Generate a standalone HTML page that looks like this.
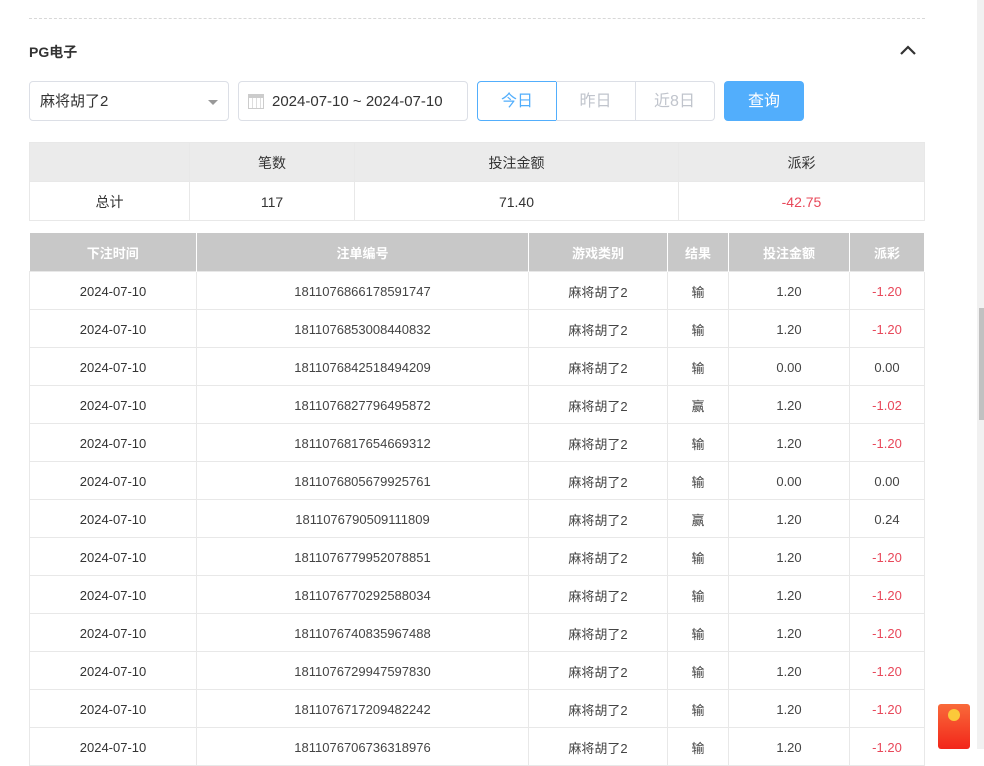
<!DOCTYPE html>
<html><head><meta charset="utf-8"><style>
*{margin:0;padding:0;box-sizing:border-box}
body{width:984px;height:749px;overflow:hidden;background:#fff;font-family:"Liberation Sans","Noto Sans CJK SC",sans-serif;color:#333;position:relative}
.dash{position:absolute;left:29px;top:18px;width:896px;border-top:1px dashed #d8d8d8}
.title{position:absolute;left:29px;top:42px;font-size:14px;font-weight:bold;color:#333}
.chev{position:absolute;left:899px;top:44px}
.sel{position:absolute;left:29px;top:81px;width:200px;height:40px;border:1px solid #dcdfe6;border-radius:4px;font-size:15px;padding:0 10px;line-height:40px;color:#333}
.sel:after{content:"";position:absolute;right:10px;top:18px;border:5px solid transparent;border-top:5px solid #999}
.date{position:absolute;left:238px;top:81px;width:230px;height:40px;border:1px solid #dcdfe6;border-radius:4px;font-size:15px;line-height:40px;padding-left:33px;color:#333}
.cal{position:absolute;left:9px;top:12px;width:16px;height:15px;border:1px solid #ccc;border-top:4px solid #ccc;background:repeating-linear-gradient(90deg,#fff 0 3px,#ddd 3px 4px)}
.seg{position:absolute;top:81px;height:40px;font-size:16px;line-height:40px;text-align:center;border:1px solid #dcdfe6;color:#c0c4cc}
.btn{position:absolute;left:724px;top:81px;width:80px;height:40px;background:#52aefc;border-radius:4px;color:#fff;font-size:16px;line-height:41px;text-align:center}
table{position:absolute;border-collapse:collapse;table-layout:fixed}
td{border:1px solid #e8e8e8;text-align:center;padding-top:2px}
.sum{left:29px;top:142px;width:896px;font-size:14px}
.sum tr:first-child td{background:#ebebeb;height:39px}
.sum tr td{height:39px}
.det{left:29px;top:233px;width:896px;font-size:13px}
.det th{background:#c8c8c8;color:#fff;height:38px;font-weight:bold;font-size:13px;border-right:1px solid #fff;padding-top:2px}
.det td{height:38px;color:#444}
.det td:nth-child(1){color:#333}
.r{color:#e8485a!important}
.scroll{position:absolute;left:977px;top:0;width:7px;height:749px;background:#f1f1f1}
.thumb{position:absolute;left:979px;top:308px;width:5px;height:112px;background:#c1c1c1}
.red{position:absolute;left:938px;top:704px;width:32px;height:45px;background:linear-gradient(#f96a3a,#f2261a);border-radius:3px}
.red:after{content:"";position:absolute;left:10px;top:5px;width:12px;height:12px;border-radius:50%;background:#fbc93a}
</style></head><body>
<div class="dash"></div>
<div class="title">PG电子</div>
<svg class="chev" width="18" height="12" viewBox="0 0 18 12"><path d="M2 10 L9 3 L16 10" fill="none" stroke="#333" stroke-width="2.2"/></svg>
<div class="sel">麻将胡了2</div>
<div class="date"><span class="cal"></span>2024-07-10 ~ 2024-07-10</div>
<div class="seg" style="left:477px;width:80px;border-color:#52aefc;color:#52aefc;border-radius:4px 0 0 4px">今日</div>
<div class="seg" style="left:556px;width:80px;border-left:none">昨日</div>
<div class="seg" style="left:635px;width:80px;border-left:none;border-radius:0 4px 4px 0">近8日</div>
<div class="btn">查询</div>
<table class="sum">
<colgroup><col style="width:160px"><col style="width:165px"><col style="width:324px"><col></colgroup>
<tr><td></td><td>笔数</td><td>投注金额</td><td>派彩</td></tr>
<tr><td>总计</td><td>117</td><td>71.40</td><td class="r">-42.75</td></tr>
</table>
<table class="det">
<colgroup><col style="width:167px"><col style="width:332px"><col style="width:139px"><col style="width:61px"><col style="width:121px"><col></colgroup>
<tr><th>下注时间</th><th>注单编号</th><th>游戏类别</th><th>结果</th><th>投注金额</th><th>派彩</th></tr>
<tr><td>2024-07-10</td><td>1811076866178591747</td><td>麻将胡了2</td><td>输</td><td>1.20</td><td class="r">-1.20</td></tr>
<tr><td>2024-07-10</td><td>1811076853008440832</td><td>麻将胡了2</td><td>输</td><td>1.20</td><td class="r">-1.20</td></tr>
<tr><td>2024-07-10</td><td>1811076842518494209</td><td>麻将胡了2</td><td>输</td><td>0.00</td><td>0.00</td></tr>
<tr><td>2024-07-10</td><td>1811076827796495872</td><td>麻将胡了2</td><td>赢</td><td>1.20</td><td class="r">-1.02</td></tr>
<tr><td>2024-07-10</td><td>1811076817654669312</td><td>麻将胡了2</td><td>输</td><td>1.20</td><td class="r">-1.20</td></tr>
<tr><td>2024-07-10</td><td>1811076805679925761</td><td>麻将胡了2</td><td>输</td><td>0.00</td><td>0.00</td></tr>
<tr><td>2024-07-10</td><td>1811076790509111809</td><td>麻将胡了2</td><td>赢</td><td>1.20</td><td>0.24</td></tr>
<tr><td>2024-07-10</td><td>1811076779952078851</td><td>麻将胡了2</td><td>输</td><td>1.20</td><td class="r">-1.20</td></tr>
<tr><td>2024-07-10</td><td>1811076770292588034</td><td>麻将胡了2</td><td>输</td><td>1.20</td><td class="r">-1.20</td></tr>
<tr><td>2024-07-10</td><td>1811076740835967488</td><td>麻将胡了2</td><td>输</td><td>1.20</td><td class="r">-1.20</td></tr>
<tr><td>2024-07-10</td><td>1811076729947597830</td><td>麻将胡了2</td><td>输</td><td>1.20</td><td class="r">-1.20</td></tr>
<tr><td>2024-07-10</td><td>1811076717209482242</td><td>麻将胡了2</td><td>输</td><td>1.20</td><td class="r">-1.20</td></tr>
<tr><td>2024-07-10</td><td>1811076706736318976</td><td>麻将胡了2</td><td>输</td><td>1.20</td><td class="r">-1.20</td></tr>
</table>
<div class="scroll"></div><div class="thumb"></div>
<div class="red"></div>
</body></html>
